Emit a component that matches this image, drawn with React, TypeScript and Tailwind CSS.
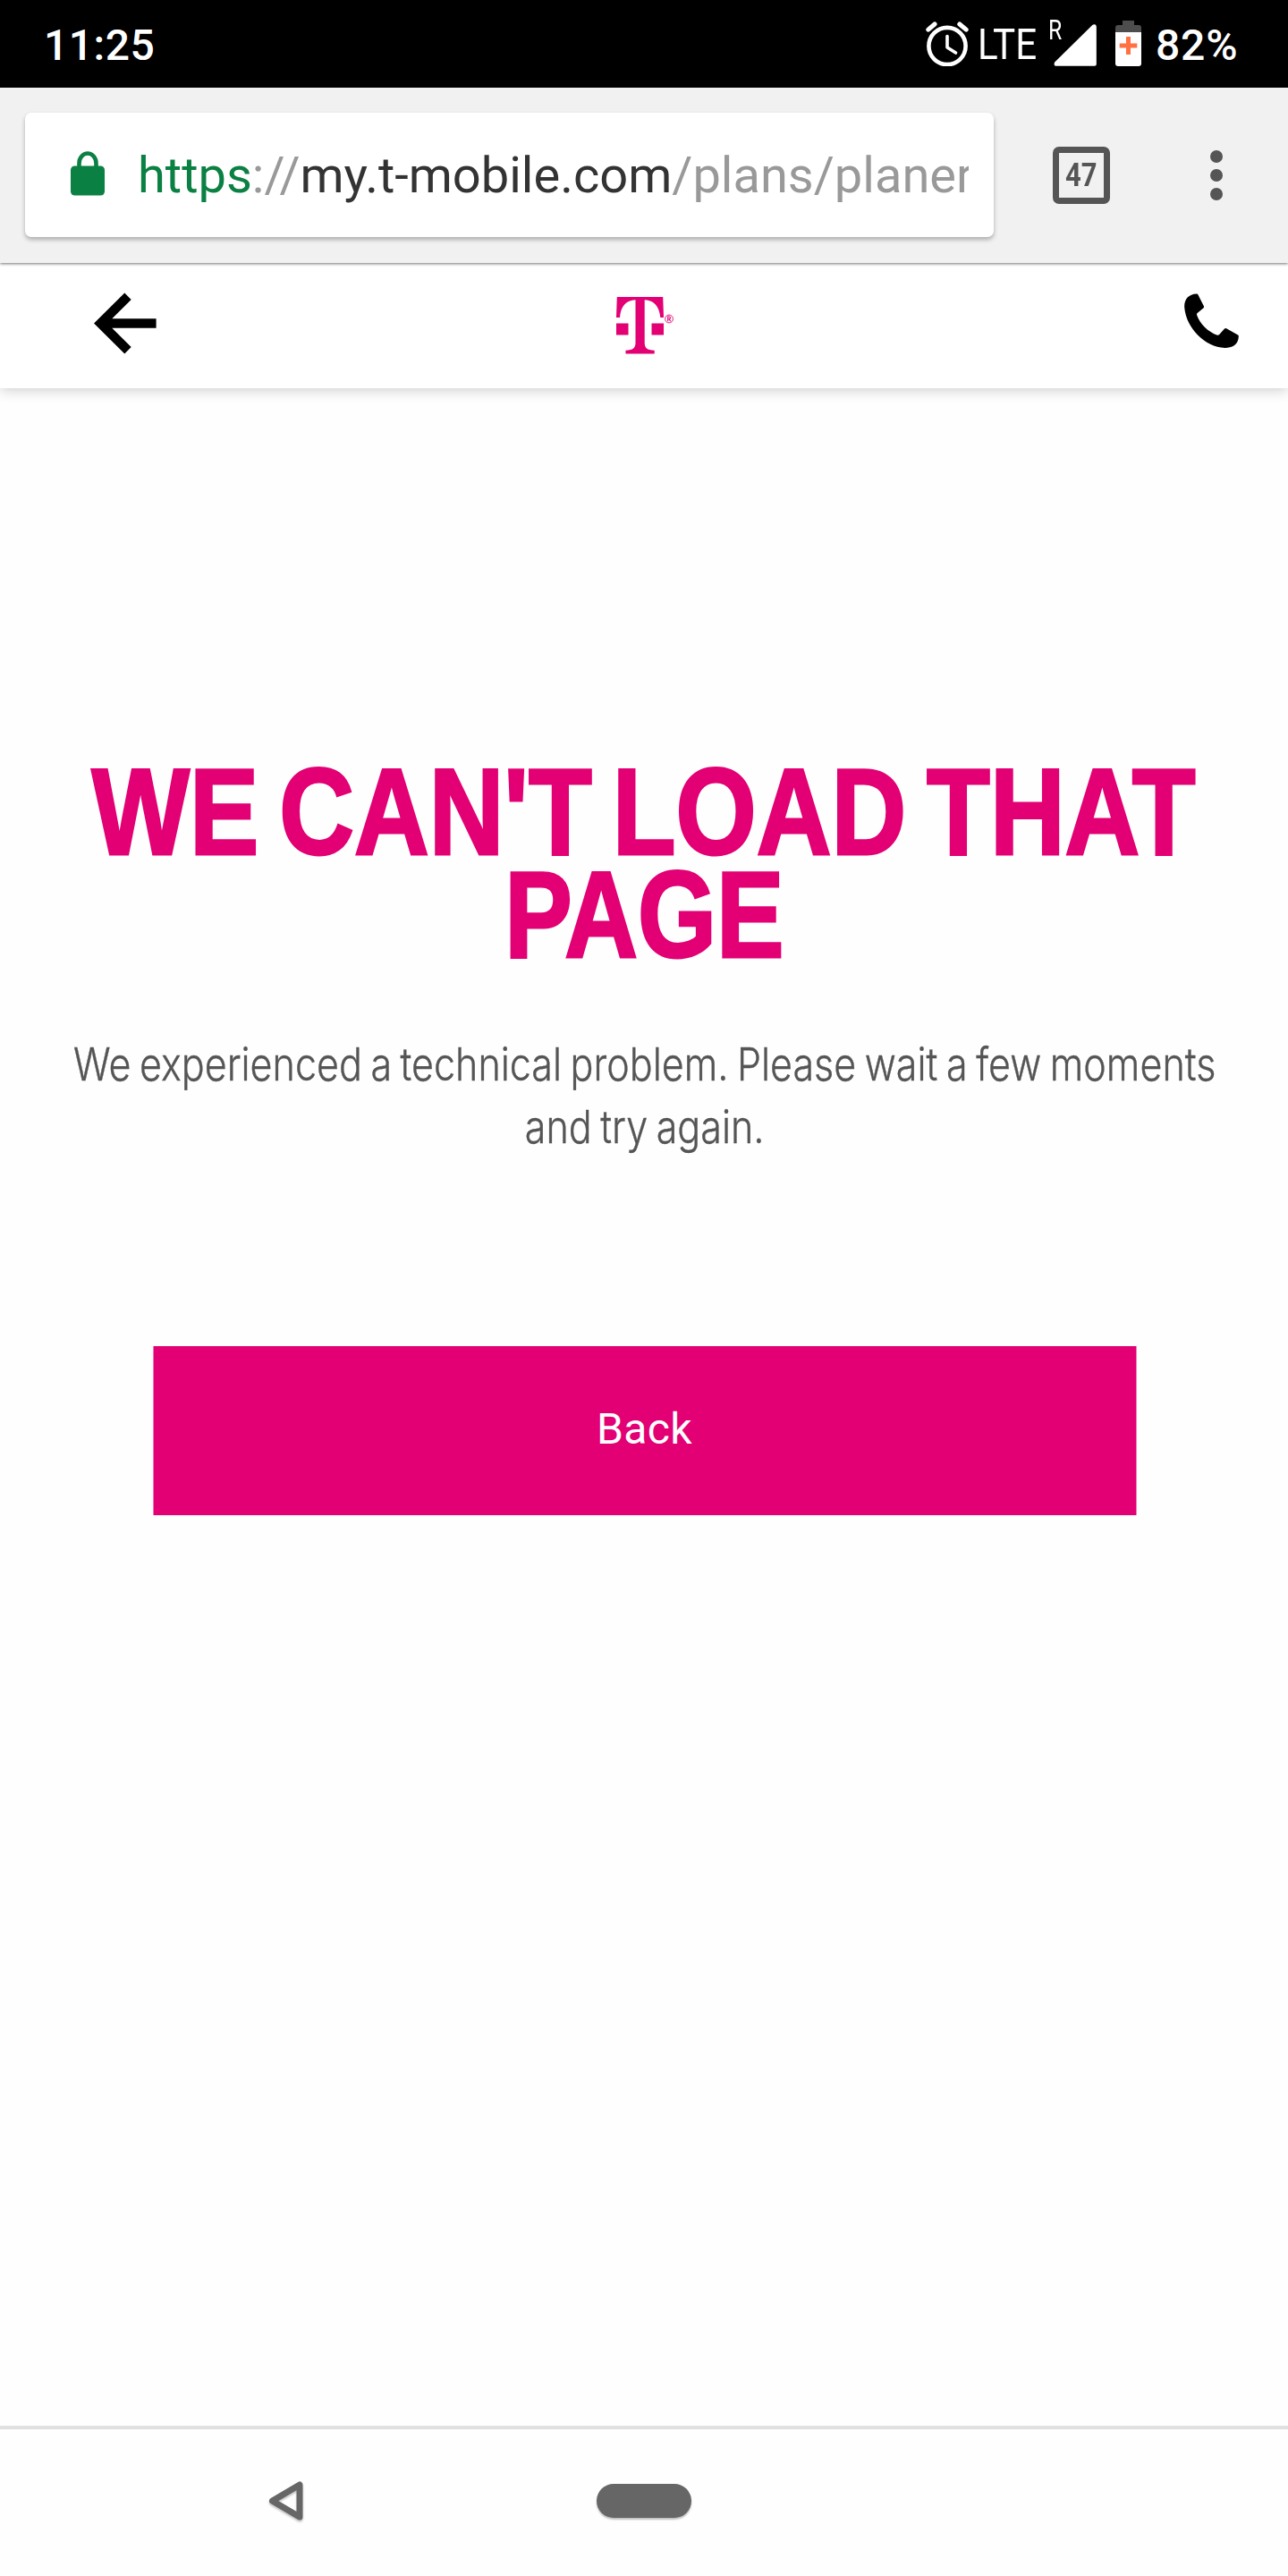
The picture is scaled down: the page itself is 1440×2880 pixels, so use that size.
function AlarmIcon() {
  return (
    <svg className="h-[50px] w-[48px] shrink-0" viewBox="0 0 48 50" fill="none" stroke="#fff" strokeLinecap="round" strokeLinejoin="round">
      <circle cx="24" cy="27.5" r="20.6" strokeWidth="4.6" />
      <path d="M24 16.5V29l9.5 6" strokeWidth="3.6" />
      <path d="M2.8 9.2 10 3M37.8 3 45.2 9.2" strokeWidth="5" />
    </svg>
  );
}

function StatusBar() {
  return (
    <div className="flex h-[98px] items-start bg-black font-medium text-white">
      <div className="ml-[49px] mt-[3px] h-24 w-[130px] whitespace-nowrap text-[48px] leading-[96px] tracking-[0.5px]">11:25</div>
      <div className="ml-auto flex items-start">
        <div className="mt-6"><AlarmIcon /></div>
        <div className="ml-[10px] mt-[2px] w-[81px] whitespace-nowrap text-[49px] font-normal leading-[96px]">
          <span className="inline-block origin-left scale-x-[0.86]">LTE</span>
        </div>
        <div className="relative mt-[22px] h-[52px] w-[58px]">
          <span className="absolute left-[-2px] top-[-4px] inline-block origin-left scale-x-[0.8] text-[31px] font-normal leading-[32px]">R</span>
          <svg className="absolute left-[4px] top-[5px] h-[47px] w-[48px]" viewBox="0 0 48 47"><path d="M1.2 42.5 43.3.9Q45 0 46.6.6q1.2.6 1.2 2.6V45q0 1.8-2 1.8H3Q.8 46.8.6 45.2.5 43.6 1.2 42.5Z" fill="#fff" /></svg>
        </div>
        <svg className="ml-[15px] mt-[23px] h-[51px] w-[29px]" viewBox="0 0 29 51">
          <path d="M8 0h13v5h5q3 0 3 3v5H0V8q0-3 3-3h5Z" fill="#4d4d4d" />
          <path d="M0 13h29v35q0 3-3 3H3q-3 0-3-3Z" fill="#fff" />
          <path d="M12 18h5v7.5h7.3v5H17v7.5h-5v-7.500H4.700v-5H12Z" fill="#ff7043" />
        </svg>
        <div className="ml-4 mr-14 mt-[3px] w-[92px] whitespace-nowrap text-[48px] leading-[96px] tracking-[0.8px]">82%</div>
      </div>
    </div>
  );
}

function BrowserBar() {
  return (
    <div className="relative z-20 flex h-[196px] items-start bg-[#f1f1f1] shadow-[0_1px_3px_rgba(0,0,0,0.55)]">
      <div className="ml-7 mt-7 flex h-[139px] w-[1083px] rounded-[7px] bg-white shadow-[0_3px_5px_rgba(0,0,0,0.28)]">
        <svg className="ml-[51px] mt-[43px] h-[50px] w-[38px] shrink-0" viewBox="0 0 38 50">
          <path d="M9.500 19V13.500a9.500 11 0 0 1 19 0V19" fill="none" stroke="#0b8043" strokeWidth="4.600" />
          <rect y="16.500" width="38" height="33" rx="4.500" fill="#0b8043" />
        </svg>
        <div className="ml-[37px] h-[139px] w-[929px] overflow-hidden whitespace-nowrap text-[56px] leading-[141px] text-[#999]">
          <span className="text-[#0b8043]">https</span>://<span className="text-[#333]">my.t-mobile.com</span>/plans/planer
        </div>
      </div>
      <div className="ml-[66px] mt-[66px] flex size-16 items-center justify-center rounded-[7px] border-[7px] border-[#555] text-[36px] font-bold leading-none text-[#555]">
        <span className="inline-block scale-x-[0.86]">47</span>
      </div>
      <div className="ml-[112px] mt-[70px] flex flex-col gap-[7px]">
        <i className="size-3.5 rounded-full bg-[#555]" />
        <i className="size-3.5 rounded-full bg-[#555]" />
        <i className="size-3.5 rounded-full bg-[#555]" />
      </div>
    </div>
  );
}

function SiteHeader() {
  return (
    <div className="relative z-10 flex h-[140px] items-start bg-white shadow-[0_2px_14px_rgba(0,0,0,0.2)]">
      <svg className="ml-[105px] mt-[33px] h-[69px] w-[70px]" viewBox="0 0 70 69" fill="none" stroke="#000" strokeWidth="10.500">
        <path d="M69.600 34.500H12M38 4.300 7.500 34.500 38 64.700" />
      </svg>
      <div className="ml-[514px] mt-[38px] flex">
        <svg className="h-16 w-[53px]" viewBox="0 0 53 64" fill="#e20074">
          <path d="M.8 0H52.200L53 23H49.300C48 10 42 3.500 31.700 3.200V51c0 6 2.300 8.500 11 8.700v3.800H10.500v-3.800c8.500-.2 11-2.700 11-8.700V3.200C11 3.500 5 10 4 23H0Z" />
          <path d="M0 29.500h13.500v13H0zM39.500 29.500H53v13H39.500z" />
        </svg>
        <svg className="ml-px mt-[19px] h-[11px] w-[10px]" viewBox="0 0 10 11" fill="none" stroke="#e20074" strokeWidth="0.900">
          <circle cx="5" cy="5.500" r="4.400" />
          <path d="M3.700 8.200V3h1.400q1.400 0 1.400 1.300T5.100 5.700H3.700M5.200 5.700 6.700 8.200" strokeWidth="1.100" />
        </svg>
      </div>
      <svg className="ml-auto mr-[55px] mt-[34px] h-[61px] w-[61px]" viewBox="0 0 61 61">
        <path d="M14 .6Q14.800.5 15.300 1.300L22 14.500Q22.300 15.500 21.600 16.300L14.400 22.300Q13.800 23 14.200 24.500C18 34.500 26.500 43 37 46.800Q38.500 47 39.200 46L45 39.500Q46 38.700 47.200 39.200L60 46.500Q61 47 60.800 48.500C60.500 57.500 53 61 45.500 61 23 60 2 38.500.2 15.500-.2 7 4.500.8 14 .6Z" />
      </svg>
    </div>
  );
}

function ErrorMessage() {
  return (
    <main className="flex grow flex-col items-center bg-[#fefefe]">
      <h1 className="mt-[416px] flex flex-col items-center whitespace-nowrap font-['Liberation_Sans'] text-[138px] font-bold leading-[115px] text-[#e20074] [-webkit-text-stroke:3px_#e20074] [word-spacing:-11px]">
        <span className="scale-x-[0.84]">WE CAN'T LOAD THAT</span>
        <span className="scale-x-[0.82]">PAGE</span>
      </h1>
      <p className="mt-[75px] flex translate-x-px flex-col items-center whitespace-nowrap font-[Inter] text-[51px] font-light leading-[70px] text-[#555] [-webkit-text-stroke:0.4px_#555] [word-spacing:-3px]">
        <span className="scale-x-[0.844]">We experienced a technical problem. Please wait a few moments</span>
        <span className="scale-x-[0.844]">and try again.</span>
      </p>
      <button className="mt-[210px] h-[189px] w-[1099px] translate-x-[0.5px] bg-[#e20074] pb-[4px] text-[48px] tracking-[0.4px] text-white">Back</button>
    </main>
  );
}

function NavigationBar() {
  return (
    <nav className="flex h-[168px] items-start border-t-4 border-[#e0e0e0] bg-[#fefefe]">
      <svg className="ml-[300px] mt-[57px] h-[48px] w-[40px] drop-shadow-[0_2px_1px_rgba(0,0,0,0.25)]" viewBox="0 0 40 48" fill="none" stroke="#666" strokeWidth="7" strokeLinejoin="round">
        <path d="M35 5v36L4.500 23Z" />
      </svg>
      <div className="ml-[327px] mt-[61px] h-[38px] w-[106px] rounded-full bg-[#666] shadow-[0_2px_2px_rgba(0,0,0,0.25)]" />
    </nav>
  );
}

export default function App() {
  return (
    <div className="flex h-[2880px] w-[1440px] flex-col overflow-hidden bg-[#fefefe] font-[Roboto]">
      <StatusBar />
      <BrowserBar />
      <SiteHeader />
      <ErrorMessage />
      <NavigationBar />
    </div>
  );
}
